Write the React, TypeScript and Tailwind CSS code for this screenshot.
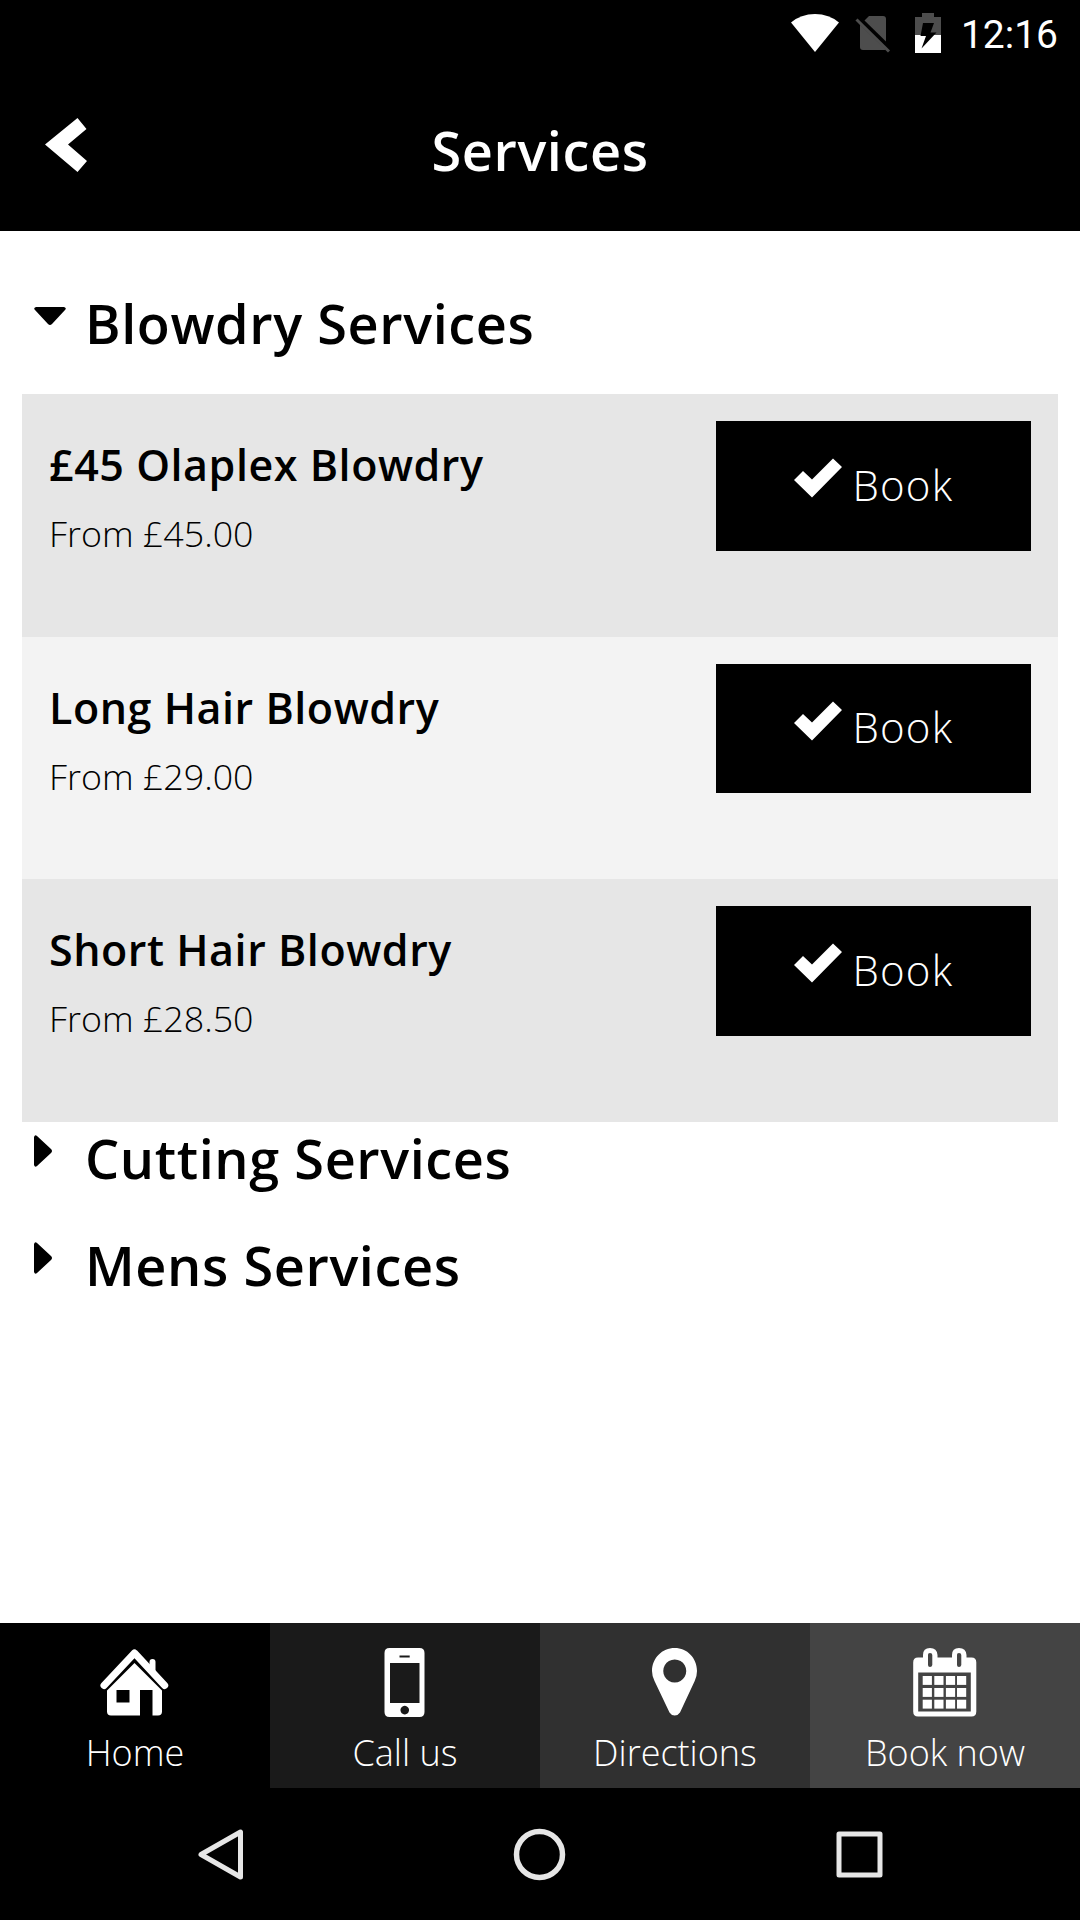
import { useState } from "react";

interface Service {
  name: string;
  price: string;
}

interface Category {
  title: string;
  services: Service[];
}

const CATEGORIES: Category[] = [
  {
    title: "Blowdry Services",
    services: [
      { name: "£45 Olaplex Blowdry", price: "£45.00" },
      { name: "Long Hair Blowdry", price: "£29.00" },
      { name: "Short Hair Blowdry", price: "£28.50" },
    ],
  },
  { title: "Cutting Services", services: [] },
  { title: "Mens Services", services: [] },
];

const StatusBar = () => (
  <div className="flex h-[66px] items-start justify-end pr-[22px] font-[Roboto,sans-serif] text-white">
    <svg className="mt-[13px] h-10 w-[50px]" viewBox="0 0 50 40">
      <path d="M1 9.500Q11 1 25 1T49 9.500L25 39Z" fill="#fff" />
    </svg>
    <svg className="mt-[13px] ml-[15px] h-10 w-9" viewBox="0 0 36 40">
      <path d="M14 3H28Q31 3 31 6V28.500L9.500 7.500Z" fill="#4d4d4d" />
      <path d="M5 11.500L30.500 36.500Q30 37 28 37H8Q5 37 5 34Z" fill="#4d4d4d" />
      <path d="M1.500 6.500L34 38.500" stroke="#4d4d4d" strokeWidth="3" />
    </svg>
    <svg className="mt-[13px] ml-6 h-10 w-[26px]" viewBox="0 0 26 40">
      <path d="M7 0H19V4H26V22H0V4H7Z" fill="#4d4d4d" />
      <path d="M0 22H26V40H0Z" fill="#fff" />
      <path d="M8 10H19L15.500 19.500H21.500L6.500 35.500L11 23H5.500Z" fill="#000" />
    </svg>
    <span className="ml-[19.500px] pt-[11px] text-[39px] leading-[48px]">12:16</span>
  </div>
);

const Header = () => (
  <header className="grid h-[165px] grid-cols-[120px_1fr_120px] items-start text-white">
    <button type="button" className="pt-[51px] pl-[45px]" aria-label="Back">
      <svg className="h-14 w-[42px]" viewBox="0 0 42 56">
        <path d="M0 27.500L32.500 1L41.500 12L23 27.500L42 44L32.500 55Z" fill="#fff" />
      </svg>
    </button>
    <h1 className="pt-10 text-center text-[54px] leading-[88px] font-semibold tracking-[0.6px]">
      Services
    </h1>
  </header>
);

const Caret = ({ open }: { open: boolean }) =>
  open ? (
    <svg className="mt-[14px] h-[18px] w-8" viewBox="0 0 32 18">
      <path d="M2 0H30Q33 1 31 3L18 17Q16 19 14 17L1 3Q-1 1 2 0Z" />
    </svg>
  ) : (
    <svg className="mt-[3px] h-8 w-[18px]" viewBox="0 0 18 32">
      <path d="M0 2Q1 -1 3 1L17 14Q19 16 17 18L3 31Q1 33 0 30Z" />
    </svg>
  );

const ServiceRow = ({ service }: { service: Service }) => (
  <li className="flex h-[242.500px] justify-between bg-[#f3f3f3] pt-[27.400px] pr-[27.500px] pl-[27px] odd:bg-[#e6e6e6]">
    <div className="pt-[15px]">
      <h3 className="text-[43px] leading-[58px] font-semibold tracking-[0.55px]">
        {service.name}
      </h3>
      <p className="pt-[11px] text-[35.800px] leading-[56px] font-light">
        From {service.price}
      </p>
    </div>
    <button
      type="button"
      className="flex h-[129.500px] w-[314.500px] items-start bg-black pl-[77.500px] text-white"
    >
      <svg className="mt-[37px] h-10 w-12" viewBox="0 0 48 40">
        <path d="M0 22L9 13L18 21.500L39 0.500L48 9L18 39.500Z" fill="#fff" />
      </svg>
      <span className="pt-[33.500px] pl-[11px] text-[42px] leading-[60px] font-light tracking-[1.2px]">
        Book
      </span>
    </button>
  </li>
);

const HomeIcon = () => (
  <svg className="h-[70px] w-[70px]" viewBox="0 0 70 70">
    <path
      d="M4 37.500L34.500 5L64.700 37.500"
      fill="none"
      stroke="#fff"
      strokeWidth="7"
      strokeLinecap="round"
      strokeLinejoin="round"
    />
    <path d="M49.500 24V14Q49.500 11 52.500 11T55.500 14V30Z" fill="#fff" />
    <path
      d="M34.500 15L62 42.500V63.500Q62 67.500 58 67.500H52.500V42H40V67.500H11Q7 67.500 7 63.500V42.500ZM16.500 42V54.500H29.500V42Z"
      fill="#fff"
      fillRule="evenodd"
    />
  </svg>
);

const PhoneIcon = () => (
  <svg className="h-[70px] w-[70px]" viewBox="0 0 70 70">
    <path
      d="M19.500 0H49.500Q54.500 0 54.500 5V64Q54.500 69 49.500 69H19.500Q14.500 69 14.500 64V5Q14.500 0 19.500 0ZM20 15V55H49.500V15ZM29.500 7.500V9.500H39.700V7.500ZM34.700 57.800A4.300 4.300 0 1 0 34.800 57.800Z"
      fill="#fff"
      fillRule="evenodd"
    />
  </svg>
);

const PinIcon = () => (
  <svg className="h-[70px] w-[70px]" viewBox="0 0 70 70">
    <path
      d="M34.700 0C47.200 0 57 10 57 23Q57 28 54.700 33L40 64.500Q38 67.500 34.700 67.500T29.500 64.500L14.500 33Q12 28 12 23C12 10 22.200 0 34.700 0ZM34.700 11.500A11.500 11.500 0 1 0 34.800 11.500Z"
      fill="#fff"
      fillRule="evenodd"
    />
  </svg>
);

const CalendarIcon = () => (
  <svg className="h-[70px] w-[70px]" viewBox="0 0 70 70">
    <path
      d="M8 9.500H13V7Q13 0 20 0T27.500 7V9.500H42V7Q42 0 49 0T56.500 7V9.500H61.500Q66.300 9.500 66.300 14.500V63.500Q66.300 68.500 61.500 68.500H8Q3.200 68.500 3.200 63.500V14.500Q3.200 9.500 8 9.500ZM18 7V17Q18 19 20 19T22.300 17V7Q22.300 5 20 5T18 7ZM47 7V17Q47 19 49 19T51.300 17V7Q51.300 5 49 5T47 7ZM8.200 24.500V63.500H60.800V24.500Z"
      fill="#fff"
      fillRule="evenodd"
    />
    {[28, 40, 51.7].map((y) =>
      [12.7, 24.3, 35.9, 47].map((x) => (
        <rect key={`${x}-${y}`} x={x} y={y} width="9.200" height="8.900" fill="#fff" />
      )),
    )}
  </svg>
);

const TABS = [
  { label: "Home", icon: HomeIcon, color: "bg-black" },
  { label: "Call us", icon: PhoneIcon, color: "bg-[#1a1a1a]" },
  { label: "Directions", icon: PinIcon, color: "bg-[#303030]" },
  { label: "Book now", icon: CalendarIcon, color: "bg-[#444444]" },
];

const SystemNav = () => (
  <div className="flex h-[132px] items-start justify-between bg-black pt-[39px] pr-[195px] pl-[196px]">
    <svg className="h-14 w-[50px]" viewBox="0 0 50 56" fill="none" stroke="#e6e6e6">
      <path d="M44.500 5V50L5 27.500Z" strokeWidth="5" strokeLinejoin="round" />
    </svg>
    <svg className="h-14 w-14" viewBox="0 0 56 56" fill="none" stroke="#e6e6e6">
      <circle cx="26.500" cy="27.500" r="23" strokeWidth="5.500" />
    </svg>
    <svg className="h-14 w-[50px]" viewBox="0 0 50 56" fill="none" stroke="#e6e6e6">
      <rect x="4" y="7" width="41" height="41" strokeWidth="5" strokeLinejoin="round" />
    </svg>
  </div>
);

const App = () => {
  const [openTitle, setOpenTitle] = useState("Blowdry Services");

  return (
    <div className="flex h-[1920px] w-[1080px] flex-col overflow-hidden bg-white font-['Open_Sans',sans-serif] text-black">
      <div className="bg-black">
        <StatusBar />
        <Header />
      </div>

      <main className="flex-1 px-[22px] pt-[62px]">
        {CATEGORIES.map(({ title, services }) => {
          const open = title === openTitle;
          return (
            <section key={title} className={open ? "mb-[10.500px]" : "h-[107px]"}>
              <button
                type="button"
                className={`flex w-full items-start pl-3 text-left ${open ? "h-[101px]" : ""}`}
                onClick={() => setOpenTitle(open ? "" : title)}
              >
                <span className="w-[51px]">
                  <Caret open={open} />
                </span>
                <h2
                  className={`text-[54px] font-semibold tracking-[0.6px] ${open ? "leading-[60px]" : "leading-[52px]"}`}
                >
                  {title}
                </h2>
              </button>
              {open && (
                <ul>
                  {services.map((service) => (
                    <ServiceRow key={service.name} service={service} />
                  ))}
                </ul>
              )}
            </section>
          );
        })}
      </main>

      <nav className="grid h-[165px] grid-cols-4 text-white">
        {TABS.map(({ label, icon: Icon, color }) => (
          <button
            key={label}
            type="button"
            className={`flex flex-col items-center pt-[25px] ${color}`}
          >
            <Icon />
            <span className="pt-[11px] text-[36px] leading-[48px] font-light">
              {label}
            </span>
          </button>
        ))}
      </nav>
      <SystemNav />
    </div>
  );
};

export default App;
